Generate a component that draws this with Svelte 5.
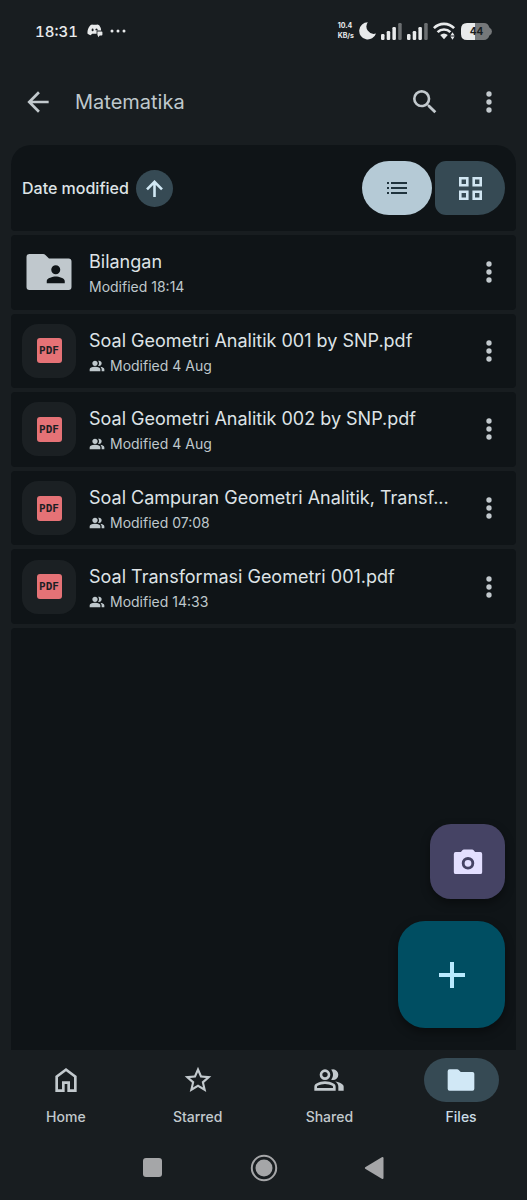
<script>
  const files = [
    { name: 'Bilangan', when: 'Modified 18:14', kind: 'folder' },
    { name: 'Soal Geometri Analitik 001 by SNP.pdf', when: 'Modified 4 Aug', kind: 'pdf' },
    { name: 'Soal Geometri Analitik 002 by SNP.pdf', when: 'Modified 4 Aug', kind: 'pdf' },
    { name: 'Soal Campuran Geometri Analitik, Transf...', when: 'Modified 07:08', kind: 'pdf' },
    { name: 'Soal Transformasi Geometri 001.pdf', when: 'Modified 14:33', kind: 'pdf' }
  ];

  const people =
    'M1 20v-2.8q0-.85.44-1.56.43-.72 1.16-1.09 1.55-.78 3.15-1.16Q7.35 13 9 13t3.25.39q1.6.38 3.15 1.16.72.37 1.16 1.09.44.71.44 1.56V20zm18 0v-3q0-1.1-.61-2.11-.62-1.02-1.74-1.74 1.27.15 2.4.51 1.13.36 2.1.89.9.5 1.38 1.11.47.61.47 1.34v3zM9 12q-1.65 0-2.82-1.18T5 8t1.18-2.82T9 4t2.82 1.18T13 8t-1.18 2.82T9 12m10-4q0 1.65-1.18 2.82T15 12q-.28 0-.7-.06a5 5 0 0 1-.7-.14q.67-.8 1.04-1.78T15 8t-.36-2.02T13.6 4.2q.35-.13.7-.16.35-.04.7-.04 1.65 0 2.82 1.18T19 8';

  const tabs = [
    { label: 'Home', d: 'M6 19h3v-6h6v6h3v-9l-6-4.5L6 10zm-2 2V9l8-6 8 6v12h-7v-6h-2v6z' },
    {
      label: 'Starred',
      d: 'M22 9.24l-7.19-.62L12 2 9.19 8.63 2 9.24l5.46 4.73L5.82 21 12 17.27 18.18 21l-1.63-7.03L22 9.24zM12 15.4l-3.76 2.27 1-4.28-3.32-2.88 4.38-.38L12 6.1l1.71 4.04 4.38.38-3.32 2.88 1 4.28L12 15.4z'
    },
    {
      label: 'Shared',
      d:
        people +
        'M9 10q.83 0 1.41-.59T11 8t-.59-1.41T9 6t-1.41.59T7 8t.59 1.41T9 10M3 18h12v-.8q0-.28-.14-.5a.97.97 0 0 0-.36-.35q-1.35-.68-2.72-1.01T9 15t-2.77.34-2.73 1.01q-.22.13-.36.35T3 17.2z'
    },
    {
      label: 'Files',
      d: 'M3.4 4H9.2q.5 0 .9.4L11.8 6H20.6A1.4 1.4 0 0 1 22 7.4V18.6A1.4 1.4 0 0 1 20.6 20H3.4A1.4 1.4 0 0 1 2 18.6V5.4A1.4 1.4 0 0 1 3.4 4'
    }
  ];

  let view = $state('list');
  let tab = $state('Files');
</script>

{#snippet dots()}
  <svg class="icon" viewBox="0 0 24 24" aria-hidden="true">
    <circle cx="12" cy="6" r="2" /><circle cx="12" cy="12" r="2" /><circle cx="12" cy="18" r="2" />
  </svg>
{/snippet}

{#snippet signal()}
  <svg width="21" height="17" viewBox="0 0 21 17" aria-hidden="true">
    <rect x="0" y="11" width="3.5" height="6" rx="1.2" />
    <rect x="5.7" y="8" width="3.5" height="9" rx="1.2" />
    <rect x="11.4" y="4" width="3.5" height="13" rx="1.2" />
    <rect x="17.2" y="0" width="3.5" height="17" rx="1.2" opacity=".4" />
  </svg>
{/snippet}

<div class="screen">
  <div class="status">
    <span class="clock">18:31</span>
    <svg width="16" height="14" viewBox="0 0 16 14" aria-hidden="true">
      <path
        fill-rule="evenodd"
        d="M3.4 1.2Q5 .3 5.8.8h3.6q1-.5 2.8.4 1.8 2.3 2 5.2H9.6v3.4H5.2L3.6 11.2Q1.6 10.6.4 9.4.2 4.6 3.4 1.2M5.6 4.6a1 1.300 0 1 0 0 2.600 1 1.300 0 0 0 0-2.600m3.900 0a1.200 1.300 0 0 0-1.100 1.600h2.200a1.200 1.300 0 0 0-1.100-1.600"
      />
      <path d="M10.400 7.400h4.200q.8 0 .8.8v2.600q0 .8-.8.8h-1.800L11 13.200v-1.600h-.6z" />
    </svg>
    <svg class="more" width="16" height="4" viewBox="0 0 16 4" aria-hidden="true">
      <circle cx="2" cy="2" r="1.500" /><circle cx="8" cy="2" r="1.500" /><circle cx="14" cy="2" r="1.500" />
    </svg>
    <span class="speed"><span>10.4</span><span>KB/s</span></span>
    <svg width="17" height="18" viewBox="0 0 17 18" aria-hidden="true">
      <path d="M8.800.3A8.600 8.600 0 1 0 17 11.600 7.400 7.400 0 0 1 8.800.3" />
    </svg>
    {@render signal()}
    {@render signal()}
    <svg width="23" height="18" viewBox="0 0 23 18" aria-hidden="true">
      <g fill="none" stroke="currentColor" stroke-width="2.600">
        <path d="M.9 6.200a14 14 0 0 1 20.200 0" />
        <path d="M4.600 10.200a9 9 0 0 1 12.800 0" />
      </g>
      <path d="M7.200 13q3.800-3.200 7.600 0L11 17.200zM17.400 13.400l2.100-3.200 2.100 3.200zM17.400 14.600h4.200l-2.100 3.200z" />
    </svg>
    <span class="battery">
      <svg width="31" height="17" viewBox="0 0 31 17" aria-hidden="true">
        <path fill="#75787a" d="M14 0h9q4 0 5.400 4.400Q31 6 31 8.500t-2.600 4.100Q27 17 23 17h-9z" />
        <path d="M6 0h8v17H6q-6 0-6-6V6q0-6 6-6" />
      </svg>
      <span>44</span>
    </span>
  </div>

  <header>
    <button class="tap" aria-label="Back">
      <svg class="icon" viewBox="0 0 24 24">
        <path d="M20 11H7.830l5.590-5.590L12 4l-8 8 8 8 1.410-1.410L7.830 13H20z" />
      </svg>
    </button>
    <h1>Matematika</h1>
    <button class="tap" aria-label="Search">
      <svg class="icon" viewBox="0 0 24 24">
        <path
          d="M15.500 14h-.79l-.28-.27A6.470 6.470 0 0 0 16 9.500 6.500 6.500 0 1 0 9.500 16c1.610 0 3.090-.59 4.230-1.570l.27.28v.79l5 4.990L20.490 19zm-6 0C7.010 14 5 11.990 5 9.500S7.010 5 9.500 5 14 7.010 14 9.500 11.990 14 9.500 14"
        />
      </svg>
    </button>
    <button class="tap" aria-label="Folder options">{@render dots()}</button>
  </header>

  <main>
    <section class="sort">
      <button class="order">
        Date modified
        <span class="arrow">
          <svg width="17" height="17" viewBox="0 0 17 17" aria-hidden="true">
            <path d="M8.500 17V2M1 9.300 8.500 1.800 16 9.300" fill="none" stroke="currentColor" stroke-width="2.600" />
          </svg>
        </span>
      </button>
      <div class="views">
        <button
          class="view list-view"
          aria-label="List view"
          aria-pressed={view === 'list'}
          onclick={() => (view = 'list')}
        >
          <svg width="20" height="12" viewBox="0 0 20 12">
            <path d="M0 0h2v2H0zM4 0h16v2H4zM0 5h2v2H0zM4 5h16v2H4zM0 10h2v2H0zM4 10h16v2H4z" />
          </svg>
        </button>
        <button
          class="view grid-view"
          aria-label="Grid view"
          aria-pressed={view === 'grid'}
          onclick={() => (view = 'grid')}
        >
          <svg width="23" height="23" viewBox="0 0 23 23">
            <path
              d="M1.300 1.300h7v7h-7zM14.700 1.300h7v7h-7zM1.300 14.700h7v7h-7zM14.700 14.700h7v7h-7z"
              fill="none"
              stroke="currentColor"
              stroke-width="2.600"
            />
          </svg>
        </button>
      </div>
    </section>

    <ul>
      {#each files as file}
        <li>
          {#if file.kind === 'folder'}
            <span class="thumb">
              <svg width="54" height="54" viewBox="0 0 24 24" aria-hidden="true">
                <path
                  d="M20.700 6H12l-1.600-1.600Q10 4 9.400 4H3.300Q2 4 2 5.300V18.700Q2 20 3.300 20H20.700Q22 20 22 18.700V7.300Q22 6 20.700 6M15 9a2 2 0 1 1 0 4 2 2 0 0 1 0-4m4 8h-8v-1c0-1.330 2.670-2 4-2s4 .67 4 2z"
                />
              </svg>
            </span>
          {:else}
            <span class="thumb tile"><span class="pdf">PDF</span></span>
          {/if}
          <div class="info">
            <span class="name">{file.name}</span>
            <span class="meta">
              {#if file.kind === 'pdf'}
                <svg width="16" height="16" viewBox="0 0 24 24" aria-hidden="true"><path d={people} /></svg>
              {/if}
              {file.when}
            </span>
          </div>
          <button class="tap" aria-label="Options for {file.name}">{@render dots()}</button>
        </li>
      {/each}
    </ul>

    <div class="rest"></div>

    <div class="fabs">
      <button class="fab scan" aria-label="Scan">
        <svg width="34" height="34" viewBox="0 -1 24 24">
          <path
            fill-rule="evenodd"
            d="M9 2.200h6q.5 0 .8.4L17 4h3.700Q22 4 22 5.300V18.200q0 1.300-1.300 1.300H3.300Q2 19.500 2 18.200V5.300Q2 4 3.300 4H7l1.200-1.400q.3-.4.8-.4M12 7.500a4.400 4.400 0 1 0 0 8.800 4.400 4.400 0 0 0 0-8.800m0 2a2.400 2.400 0 1 1 0 4.800 2.400 2.400 0 0 1 0-4.800"
          />
        </svg>
      </button>
      <button class="fab add" aria-label="New">
        <svg width="26" height="26" viewBox="0 0 26 26"><path d="M11 0h4v11h11v4H15v11h-4V15H0v-4h11z" /></svg>
      </button>
    </div>
  </main>

  <nav>
    {#each tabs as t}
      <button class:current={tab === t.label} onclick={() => (tab = t.label)}>
        <span class="pill">
          <svg class="icon" viewBox="0 0 24 24" aria-hidden="true"><path fill-rule="evenodd" d={t.d} /></svg>
        </span>
        {t.label}
      </button>
    {/each}
  </nav>

  <div class="system">
    <button aria-label="Recent apps">
      <svg width="28" height="28" viewBox="0 0 28 28"><rect x="4" y="4" width="19" height="19" rx="3" /></svg>
    </button>
    <button aria-label="Home screen">
      <svg width="28" height="28" viewBox="0 0 28 28">
        <circle cx="14" cy="14" r="12.200" fill="none" stroke="currentColor" stroke-width="2" />
        <circle cx="14" cy="14" r="8.500" />
      </svg>
    </button>
    <button aria-label="System back">
      <svg width="28" height="28" viewBox="0 0 28 28">
        <path d="M4.200 13.200 20.800 3.200Q22.500 2.500 22.500 4.200V23.800Q22.500 25.500 20.800 24.800L4.200 14.800Q3.400 14 4.200 13.200" />
      </svg>
    </button>
  </div>
</div>

<style>
  :global(body) {
    background: #181d20;
  }

  .screen {
    display: flex;
    flex-direction: column;
    min-height: 100vh;
    background: #181d20;
    color: #dee3e6;
    font-family: Inter, Roboto, sans-serif;
  }

  svg {
    display: block;
    flex: none;
    fill: currentColor;
  }

  .icon {
    width: 32px;
    height: 32px;
  }

  button {
    display: flex;
    align-items: center;
    justify-content: center;
    margin: 0;
    padding: 0;
    border: 0;
    background: none;
    color: inherit;
    font: inherit;
    cursor: pointer;
  }

  .tap {
    flex: none;
    width: 54px;
    height: 54px;
    color: #c2c9cd;
  }

  .status {
    display: flex;
    align-items: center;
    gap: 5px;
    height: 62px;
    padding: 0 35px;
    color: #e8eaeb;
  }

  .clock {
    margin-right: 4px;
    font-size: 15px;
    font-weight: 500;
    font-variant-numeric: tabular-nums;
  }

  .more {
    margin-left: 2px;
  }

  .speed {
    display: flex;
    flex-direction: column;
    margin-left: auto;
    font-size: 7px;
    font-weight: 700;
    line-height: 10px;
  }

  .battery {
    display: grid;
    place-items: center;
  }

  .battery > * {
    grid-area: 1 / 1;
  }

  .battery span {
    color: #181d20;
    font-size: 10px;
    font-weight: 700;
  }

  header {
    display: flex;
    align-items: center;
    height: 80px;
    padding: 0 11px;
  }

  h1 {
    flex: 1;
    margin: 0 0 0 10px;
    color: #bfc8cc;
    font-size: 20px;
    font-weight: 400;
  }

  header .tap:last-child {
    margin-left: 10px;
  }

  main {
    position: relative;
    display: flex;
    flex: 1;
    flex-direction: column;
    gap: 4px;
    padding: 3px 11px 0;
  }

  .sort {
    display: flex;
    align-items: center;
    justify-content: space-between;
    height: 86px;
    padding: 0 11px;
    border-radius: 20px 20px 4px 4px;
    background: #0f1417;
  }

  .order {
    gap: 7px;
    font-size: 16px;
    font-weight: 500;
  }

  .arrow {
    display: grid;
    place-items: center;
    width: 37px;
    height: 37px;
    border-radius: 50%;
    background: #364a54;
    color: #d1e8f4;
  }

  .views {
    display: flex;
    gap: 3px;
  }

  .view {
    width: 70px;
    height: 54px;
    background: #364a54;
    color: #d1e6f2;
  }

  .list-view {
    border-radius: 27px;
    background: #b5cad6;
    color: #1f333d;
  }

  .grid-view {
    border-radius: 11px 27px 27px 11px;
  }

  ul {
    display: grid;
    grid-auto-rows: 1fr;
    gap: 4px;
    min-height: 389px;
    margin: 0;
    padding: 0;
    list-style: none;
  }

  li {
    display: flex;
    align-items: center;
    gap: 13px;
    min-width: 0;
    padding-left: 11px;
    border-radius: 4px;
    background: #0f1417;
  }

  .thumb {
    display: grid;
    flex: none;
    place-items: center;
    width: 54px;
    height: 54px;
    border-radius: 16px;
    color: #c0c8cd;
  }

  .tile {
    background: #1b2023;
  }

  .pdf {
    width: 25px;
    border-radius: 3px;
    background: #e57276;
    color: #1b2023;
    font-family: "DejaVu Sans Mono", monospace;
    font-size: 11px;
    font-weight: 700;
    line-height: 25px;
    text-align: center;
  }

  .info {
    display: flex;
    flex: 1;
    flex-direction: column;
    min-width: 0;
    padding-top: 2px;
  }

  .name {
    overflow: hidden;
    font-size: 18px;
    line-height: 28px;
    text-overflow: ellipsis;
    white-space: nowrap;
  }

  .meta {
    display: flex;
    align-items: center;
    gap: 5px;
    color: #bfc8cc;
    font-size: 14px;
    line-height: 22px;
  }

  .rest {
    flex: 1;
    min-height: 240px;
    border-radius: 4px 4px 0 0;
    background: #0f1417;
  }

  .fabs {
    position: absolute;
    right: 22px;
    bottom: 22px;
    display: flex;
    flex-direction: column;
    align-items: flex-end;
    gap: 22px;
  }

  .fab {
    box-shadow: 0 4px 10px rgb(0 0 0 / 40%);
  }

  .scan {
    width: 75px;
    height: 75px;
    border-radius: 21px;
    background: #454364;
    color: #e3dfff;
  }

  .add {
    width: 107px;
    height: 107px;
    border-radius: 27px;
    background: #004e62;
    color: #b9eaff;
  }

  nav {
    display: grid;
    grid-template-columns: repeat(4, 1fr);
    padding: 8px 0 9px;
    color: #c2c9cd;
    font-size: 14px;
    font-weight: 500;
    line-height: 20px;
  }

  nav button {
    flex-direction: column;
    gap: 5px;
  }

  .pill {
    display: grid;
    place-items: center;
    width: 75px;
    height: 44px;
    border-radius: 22px;
  }

  .current {
    color: #cbdde6;
  }

  .current .pill {
    background: #364a54;
    color: #d1e8f6;
  }

  .system {
    display: flex;
    justify-content: center;
    height: 64px;
    color: #a5a6a8;
  }

  .system button {
    width: 111px;
  }
</style>
